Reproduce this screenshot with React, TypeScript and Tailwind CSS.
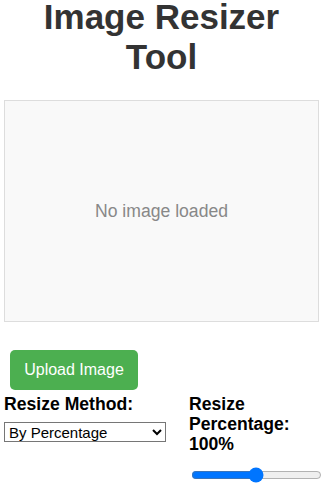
export default function App() {
  return (
    <div className="ml-[4px] w-[315px] font-['Liberation_Sans',Arial,sans-serif] text-black">
      <h1 className="-mt-[3px] text-center text-[35px] font-bold leading-[40px] text-[#333]">
        Image Resizer Tool
      </h1>

      <div className="mt-[23px] flex h-[222px] items-center justify-center border border-[#ddd] bg-[#f9f9f9]">
        <span className="text-[17.6px] text-[#888]">No image loaded</span>
      </div>

      <button className="ml-[6px] mt-[28px] flex h-[40px] w-[128px] items-center justify-center rounded-[5px] bg-[#4caf50] text-[16px] text-white">
        Upload Image
      </button>

      <div className="mt-[4px] flex">
        <div className="w-[185px] shrink-0">
          <label className="block text-[17.6px] font-bold leading-[20.2px]">Resize Method:</label>
          <select
            className="mt-[8px] block h-[20px] w-[162px] border border-[#767676] bg-white text-[15px] text-black"
            defaultValue="percentage"
          >
            <option value="percentage">By Percentage</option>
            <option value="dimensions">By Dimensions</option>
          </select>
        </div>
        <div className="w-[136px] shrink-0">
          <label className="block text-[17.6px] font-bold leading-[20.2px]">
            Resize Percentage: 100%
          </label>
          <input
            type="range"
            min={1}
            max={200}
            defaultValue={100}
            className="ml-[2px] mt-[12px] block w-[131px]"
          />
        </div>
      </div>
    </div>
  )
}
